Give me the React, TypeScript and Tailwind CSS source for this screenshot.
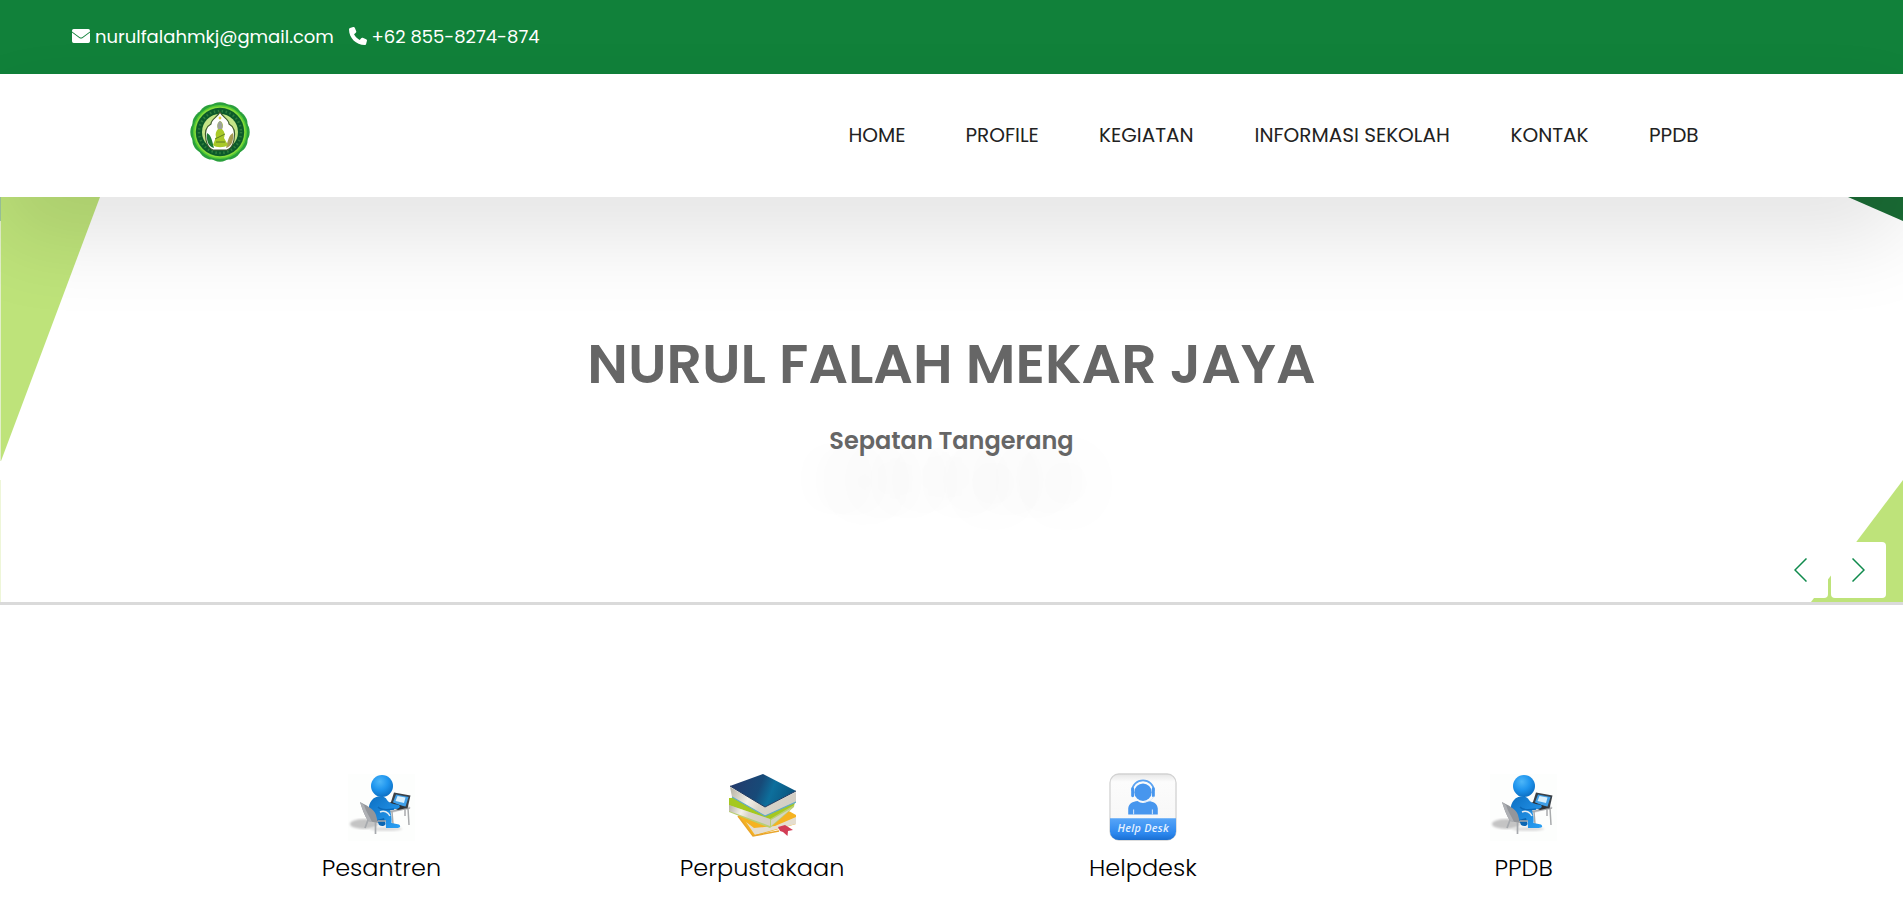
const navItems = [
  { label: 'HOME', box: 'w-[117px]' },
  { label: 'PROFILE', box: 'w-[133.500px]' },
  { label: 'KEGIATAN', box: 'w-[155.500px]' },
  { label: 'INFORMASI SEKOLAH', box: 'w-[256px]' },
  { label: 'KONTAK', box: 'w-[138.500px]' },
  { label: 'PPDB', box: 'w-[64px]' },
];

function Logo() {
  const lobes = Array.from({ length: 12 }, (_, i) => (i * Math.PI) / 6);
  return (
    <svg className="h-[62px] w-[62px]" viewBox="-31 -31 62 62">
      {lobes.map((a) => (
        <circle key={a} cx={Math.cos(a) * 15.5} cy={Math.sin(a) * 15.5} r="14.200" fill="#2aa03c" />
      ))}
      <circle r="27" fill="#55c934" />
      <circle r="25.600" fill="#86dc3c" />
      <circle r="24.200" fill="#0c5a2a" />
      <circle r="21" fill="none" stroke="#2f7d3c" strokeWidth="2.500" strokeDasharray="1.500 2.500" />
      <circle r="18" fill="#c4e487" />
      <path d="M0-20C3-14 9-13 9-8C15-5 15 3 14 8C13 13 10 17 7 18H-7C-10 17-13 13-14 8C-15 3-15-5-9-8C-9-13-3-14 0-20Z" fill="#fff" stroke="#3f5a2c" strokeWidth="1.2" />
      <path d="M-13 1C-9 3-8 8-6 16C-12 15-14 7-13 1Z" fill="#1d7a35" />
      <path d="M13 1C9 3 8 8 6 16C12 15 14 7 13 1Z" fill="#a59a50" />
      <path d="M0-11C4-9 3-5 2-3C5 0 5 3 4 6L8 13C4 16-4 16-7 13L-4 5C-5 2-4-1-2-3C-3-6-3-9 0-11Z" fill="#a9c928" />
      <path d="M0-11C3-9 3-5 2-3L-2-3C-3-6-3-9 0-11Z" fill="#9da39a" />
      <path d="M-5 7L5 2M-4 10H5" stroke="#5c7d22" strokeWidth="1" />
      <circle cy="-14" r="1.400" fill="#e4cf3c" />
    </svg>
  );
}

function DeskPerson() {
  return (
    <svg className="h-[67px] w-[67px]" viewBox="0 0 67 67">
      <defs>
        <radialGradient id="head" cx="0.4" cy="0.3" r="0.75">
          <stop offset="0" stopColor="#4db6f8" />
          <stop offset="0.5" stopColor="#1f95ee" />
          <stop offset="1" stopColor="#0b6cc0" />
        </radialGradient>
        <linearGradient id="body" x1="0" y1="0" x2="1" y2="1">
          <stop offset="0" stopColor="#0d6fc2" />
          <stop offset="1" stopColor="#2aa0f5" />
        </linearGradient>
        <filter id="soft"><feGaussianBlur stdDeviation="1.2" /></filter>
      </defs>
      <rect width="67" height="67" fill="#fdfefd" />
      <ellipse cx="16" cy="50" rx="14" ry="5" fill="#c4c4c4" filter="url(#soft)" />
      <ellipse cx="38" cy="55" rx="16" ry="2" fill="#dcdcdc" filter="url(#soft)" />
      <path d="M36 35L60 31L63 34L44 39Z" fill="#dfe0e3" />
      <path d="M40 38L62 34M60 34L61 51M57 35V42M44 38L45 50" stroke="#a9abad" strokeWidth="1.500" fill="none" />
      <path d="M42 31L46 18.500L62.500 21.500L59.500 34.500Z" fill="#3a4148" />
      <path d="M44.500 29.500L48 20.500L60.500 23L57.500 32.500Z" fill="#3f9fe8" />
      <path d="M47.500 27L49.500 22L57.500 23.500L56 29Z" fill="#d9effc" />
      <path d="M36 30L44 28L59 34L50 36Z" fill="#2e3135" />
      <path d="M24 26C28 21 37 21 39 26C41 29 45 30 51 31C53 33 51 35 47 35L42 36C43 40 44 44 43.500 49L51 50.500C54 53 51 54.500 47 54H38L37.500 47L25 46C20 40 19 32 24 26Z" fill="url(#body)" />
      <path d="M29 46L31 51C34 53 39 52 37 48L36 44Z" fill="#0b66b2" />
      <path d="M30 33C33 37 40 36 46 35" stroke="#0c69b8" strokeWidth="1.300" fill="none" />
      <path d="M32 38C36 36 40 38 42 42" stroke="#e7eef3" strokeWidth="1.500" fill="none" />
      <path d="M12 28C18 31 26 35 28 41L30 49L20 47C16 41 14 34 12 28Z" fill="#93969b" />
      <path d="M12 28L16 31C18 38 22 43 24 48L20 47C16 40 14 34 12 28Z" fill="#aeb0b4" />
      <path d="M20 46L17 54M27.500 48V60M30 47L38 47" stroke="#a6a9ad" strokeWidth="1.700" fill="none" />
      <circle cx="34" cy="12" r="11" fill="url(#head)" />
    </svg>
  );
}

function Books() {
  return (
    <svg className="h-[67px] w-[67px]" viewBox="0 0 67 67">
      <defs>
        <linearGradient id="cover" x1="0" y1="0.3" x2="1" y2="0.5">
          <stop offset="0" stopColor="#243a6c" />
          <stop offset="0.45" stopColor="#174a78" />
          <stop offset="0.65" stopColor="#0d6f9c" />
          <stop offset="1" stopColor="#0a537d" />
        </linearGradient>
        <linearGradient id="pages" x1="0" y1="0" x2="1" y2="0.2">
          <stop offset="0" stopColor="#b5b0a2" />
          <stop offset="0.35" stopColor="#f4f1ea" />
          <stop offset="0.55" stopColor="#d9d4c9" />
          <stop offset="1" stopColor="#d3cec4" />
        </linearGradient>
      </defs>
      <path d="M9 42L24 62L30 61L67 50V41L58 36L20 38Z" fill="#f5b221" />
      <path d="M17 48L25 54L46 52L67 43V50L26 61Z" fill="#e5ded0" />
      <path d="M9 42L24 62L50 57" fill="none" stroke="#e9a52b" strokeWidth="1.500" />
      <path d="M49 53L56 51L64 56L59 57L58.500 62L54 58L51 57Z" fill="#d23d55" />
      <path d="M0 24L37 42L66 27L65 33L41 54L0 38Z" fill="#b9cf72" />
      <path d="M0 24L5 24L37 41L66 27L65 31L41 45L0 31Z" fill="#a5c81f" />
      <path d="M0 31L41 45V52L0 37Z" fill="url(#pages)" />
      <path d="M42 46L63 34L42 52Z" fill="#d5d4c2" />
      <path d="M1 13L3 23L36 42L67 28V18L36 33Z" fill="url(#pages)" />
      <path d="M3 23L36 42L67 28" fill="none" stroke="#62abc4" strokeWidth="1.200" />
      <path d="M1 12L34 0L67 17L36 33Z" fill="url(#cover)" />
      <path d="M1 12L36 33L67 17" fill="none" stroke="#263c60" strokeWidth="1" />
    </svg>
  );
}

function HelpDesk() {
  return (
    <svg className="h-[68px] w-[68px]" viewBox="0 0 69 69">
      <defs>
        <linearGradient id="tile" x1="0" y1="0" x2="0" y2="1">
          <stop offset="0" stopColor="#e6e6e6" />
          <stop offset="0.12" stopColor="#fcfcfc" />
          <stop offset="1" stopColor="#f5f5f5" />
        </linearGradient>
        <linearGradient id="band" x1="0" y1="0" x2="0" y2="1">
          <stop offset="0" stopColor="#57a5f8" />
          <stop offset="0.7" stopColor="#2c87ee" />
          <stop offset="1" stopColor="#1a6fd2" />
        </linearGradient>
      </defs>
      <rect x="1" y="1" width="67" height="67" rx="9" fill="url(#tile)" stroke="#d2d2d2" strokeWidth="1.300" />
      <path d="M1 46H68V59A9 9 0 0 1 59 68H10A9 9 0 0 1 1 59Z" fill="url(#band)" />
      <path d="M19.500 42V36C20 31 24 29 29 28.500C32 31 37 31 40 28.500C45 29 49 31 49.500 36V42Z" fill="#4796ee" />
      <circle cx="34.500" cy="19.500" r="8.800" fill="#4796ee" />
      <path d="M23.500 18A11 10.500 0 0 1 45.500 18" fill="none" stroke="#5ba3f2" strokeWidth="1.700" />
      <path d="M24 16V23M45 16V23" stroke="#4796ee" strokeWidth="3" strokeLinecap="round" />
      <path d="M45 24C44 28 40 29 36 29M25 37V42M44 37V42" fill="none" stroke="#d9eafc" strokeWidth="1" />
      <text x="34.500" y="60" textAnchor="middle" fill="#e3f0ff" fontFamily="Open Sans, sans-serif" fontSize="11" fontStyle="italic" fontWeight="600" textLength="52">Help Desk</text>
    </svg>
  );
}

const services = [
  { label: 'Pesantren', Icon: DeskPerson },
  { label: 'Perpustakaan', Icon: Books },
  { label: 'Helpdesk', Icon: HelpDesk },
  { label: 'PPDB', Icon: DeskPerson },
];

export default function App() {
  return (
    <div className="h-[898px] w-full overflow-hidden bg-white font-['Poppins','Inter',sans-serif]">
      <div className="flex h-[74px] items-center bg-[#11813a] pb-[2px] pl-[72px] text-[18px] text-white">
        <svg className="mr-[5px] h-[14px] w-[18px]" viewBox="0 0 18 14" fill="currentColor">
          <path d="M1.700 0H16.300A1.700 1.700 0 0 1 18 1.700V2.400L10.200 8.200Q9 9 7.800 8.200L0 2.400V1.700A1.700 1.700 0 0 1 1.700 0Z" />
          <path d="M0 3.500L7.300 9Q9 10.100 10.700 9L18 3.500V12.300A1.700 1.700 0 0 1 16.300 14H1.700A1.700 1.700 0 0 1 0 12.300Z" />
        </svg>
        <span className="w-[253.500px] whitespace-nowrap">nurulfalahmkj@gmail.com</span>
        <svg className="mr-[5px] h-[18px] w-[18px]" viewBox="0 0 512 512" fill="currentColor">
          <path d="M164.900 24.600c-7.700-18.600-28-28.500-47.400-23.200l-88 24C12.100 30.200 0 46 0 64c0 247.400 200.600 448 448 448 18 0 33.800-12.100 38.600-29.500l24-88c5.300-19.400-4.600-39.700-23.200-47.400l-96-40c-16.300-6.800-35.200-2.100-46.300 11.600L304.700 368C234.300 334.700 177.300 277.700 144 207.300l49.300-40.300c13.700-11.200 18.400-30 11.600-46.300l-40-96z" />
        </svg>
        <span className="whitespace-nowrap">+62 855-8274-874</span>
      </div>

      <header className="relative z-10 flex h-[123px] items-center justify-between bg-white pl-[189px] shadow-[0_42px_84px_rgba(0,0,0,0.105)]">
        <div className="pb-[7px]"><Logo /></div>
        <nav className="mr-[190px] flex text-[20px] leading-[27px] text-[#222]">
          {navItems.map((n) => (
            <a key={n.label} className={`${n.box} whitespace-nowrap`}>{n.label}</a>
          ))}
        </nav>
      </header>

      <section className="relative flex h-[408px] flex-col items-center border-b-[3px] border-[#dadada] bg-white">
        <svg className="absolute inset-0 h-[405px] w-full" viewBox="0 0 1903 405" preserveAspectRatio="none">
          <path d="M1 0H100L1 264Z" fill="#bee37a" />
          <path d="M0 0H1V24H0Z" fill="#9cc59c" />
          <path d="M0 24H1V264H0Z" fill="#e2efc9" />
          <path d="M0 283H1V405H0Z" fill="#eef6d8" />
          <path d="M1848 0H1903V24Z" fill="#1a6c35" />
          <path d="M1903 283V405H1811Z" fill="#bee37a" />
        </svg>
        <h1 className="relative mt-[132px] whitespace-nowrap text-[55.300px] font-semibold leading-[70px] text-[#666]">NURUL FALAH MEKAR JAYA</h1>
        <p className="relative mt-[26px] whitespace-nowrap text-[24px] font-semibold leading-[32px] text-[#666] [text-shadow:0_38px_66px_rgba(0,0,0,0.33)]">Sepatan Tangerang</p>
        <div className="absolute bottom-[4px] right-[17px] flex gap-[3px] text-[#0f8a4c]">
          <button className="flex h-[56px] w-[55px] items-center justify-center rounded bg-white">
            <svg className="h-[24px] w-[13px]" viewBox="0 0 13 24" fill="none" stroke="currentColor" strokeWidth="1.500"><path d="M12.500 0.500L1 12L12.500 23.500" /></svg>
          </button>
          <button className="flex h-[56px] w-[55px] items-center justify-center rounded bg-white">
            <svg className="h-[24px] w-[13px]" viewBox="0 0 13 24" fill="none" stroke="currentColor" strokeWidth="1.500"><path d="M0.500 0.500L12 12L0.500 23.500" /></svg>
          </button>
        </div>
      </section>

      <section className="ml-[191px] mt-[167px] grid w-[1523px] grid-cols-4">
        {services.map(({ label, Icon }) => (
          <div key={label} className="flex flex-col items-center">
            <div className="flex h-[70px] items-center"><Icon /></div>
            <span className="mt-[8px] whitespace-nowrap text-[24px] font-light leading-[36px] text-black">{label}</span>
          </div>
        ))}
      </section>
    </div>
  );
}
